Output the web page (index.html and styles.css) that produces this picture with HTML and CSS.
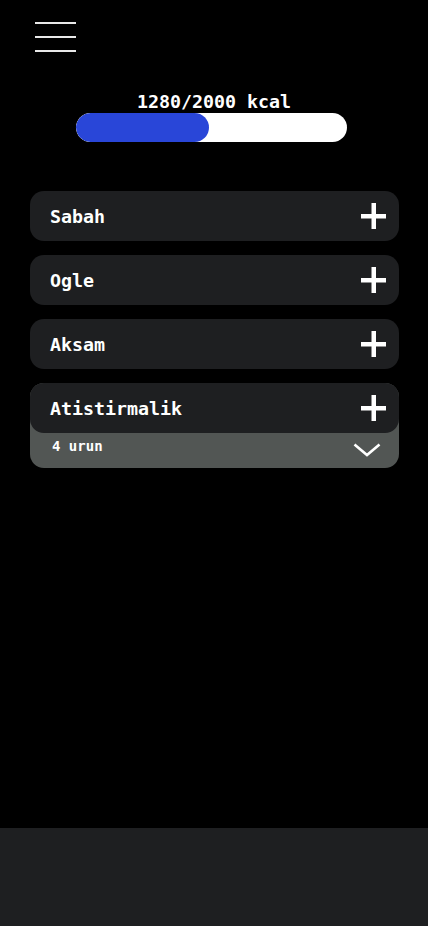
FILE: index.html
```html
<!DOCTYPE html>
<html>
<head>
<meta charset="utf-8">
<link rel="stylesheet" href="styles.css">
</head>
<body>
<div class="app">
  <div class="content">
    <div class="menu">
      <span class="line"></span>
      <span class="line"></span>
      <span class="line"></span>
    </div>
    <div class="kcal">1280/2000 kcal</div>
    <div class="bar"><div class="fill" style="width:133px"></div></div>
    <div class="meals">
      <div class="card">
        <span class="title">Sabah</span>
        <svg class="plus" width="25" height="26" viewBox="0 0 25 26"><rect x="0" y="11" width="25" height="4.5" fill="#fff"/><rect x="10.5" y="0" width="4.5" height="26" fill="#fff"/></svg>
      </div>
      <div class="card">
        <span class="title">Ogle</span>
        <svg class="plus" width="25" height="26" viewBox="0 0 25 26"><rect x="0" y="11" width="25" height="4.5" fill="#fff"/><rect x="10.5" y="0" width="4.5" height="26" fill="#fff"/></svg>
      </div>
      <div class="card">
        <span class="title">Aksam</span>
        <svg class="plus" width="25" height="26" viewBox="0 0 25 26"><rect x="0" y="11" width="25" height="4.5" fill="#fff"/><rect x="10.5" y="0" width="4.5" height="26" fill="#fff"/></svg>
      </div>
      <div class="group">
        <div class="card">
          <span class="title">Atistirmalik</span>
          <svg class="plus" width="25" height="26" viewBox="0 0 25 26"><rect x="0" y="11" width="25" height="4.5" fill="#fff"/><rect x="10.5" y="0" width="4.5" height="26" fill="#fff"/></svg>
        </div>
        <div class="sub">
          <span class="count">4 urun</span>
          <svg class="chev" width="28" height="14" viewBox="0 0 28 14"><polyline points="1.5,1.5 14,12 26.5,1.5" fill="none" stroke="#fff" stroke-width="2.6"/></svg>
        </div>
      </div>
    </div>
  </div>
  <div class="bottom"></div>
</div>
</body>
</html>
```
FILE: styles.css
```css
html, body {
  margin: 0;
  padding: 0;
  background: #000;
}
body {
  font-family: "DejaVu Sans Mono", "Liberation Mono", monospace;
  font-weight: bold;
  color: #fff;
}
.app {
  width: 428px;
  height: 926px;
  display: flex;
  flex-direction: column;
}
.content {
  flex: 1;
  display: flex;
  flex-direction: column;
}
.menu {
  margin: 22px 0 0 35px;
  width: 41px;
  display: flex;
  flex-direction: column;
  gap: 12px;
}
.line {
  display: block;
  height: 2px;
  background: #e8e8e8;
}
.kcal {
  margin-top: 39px;
  text-align: center;
  font-size: 18.3px;
  line-height: 21px;
}
.bar {
  margin: 1px 0 0 76px;
  width: 271px;
  height: 29px;
  border-radius: 15px;
  background: #fff;
  overflow: hidden;
}
.fill {
  height: 100%;
  background: #2946d8;
  border-radius: 15px;
}
.meals {
  margin: 49px 29px 0 30px;
  display: flex;
  flex-direction: column;
  gap: 14px;
}
.card {
  height: 50px;
  border-radius: 14px;
  background: #1e1f21;
  display: flex;
  align-items: center;
  justify-content: space-between;
  padding: 0 13px 0 20px;
}
.title {
  font-size: 18.3px;
  line-height: 21px;
}
.plus {
  display: block;
}
.group {
  background: #525654;
  border-radius: 14px;
}
.sub {
  height: 35px;
  display: flex;
  align-items: flex-start;
  justify-content: space-between;
  padding: 0 18px 0 22px;
}
.count {
  font-size: 14px;
  line-height: 17px;
  margin-top: 5px;
}
.chev {
  display: block;
  margin-top: 10px;
}
.bottom {
  height: 98px;
  background: #1e1f21;
}
```
